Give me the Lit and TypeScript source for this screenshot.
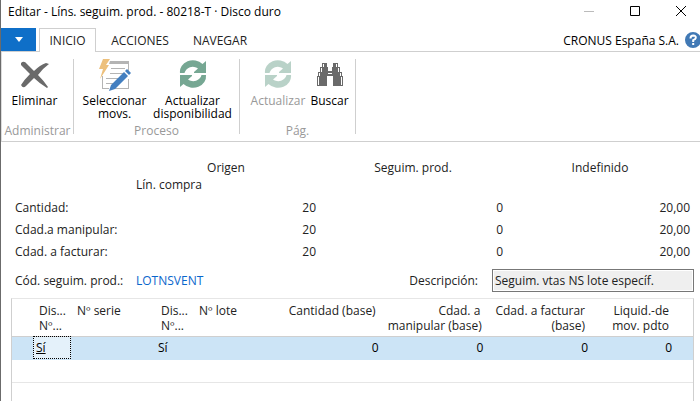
import { LitElement, html, css, svg, nothing } from "lit";
import { customElement } from "lit/decorators.js";
import { classMap } from "lit/directives/class-map.js";

const refreshIcon = svg`
  <path fill="currentColor" d="M0 12 A13 11.500 0 0 1 22.500 3 L26 0 V12 H14 V11 L18 7.500 A8.500 8 0 0 0 4.500 12 Z"/>
  <path fill="currentColor" d="M26 14 A13 11.500 0 0 1 3.500 23 L0 26 V14 H12 V15 L8 18.500 A8.500 8 0 0 0 21.500 14 Z"/>`;

const icons = {
  remove: html`<svg class="icon" viewBox="0 0 32 32" aria-hidden="true">
    <path fill="#6a6a6a" d="M2 4 Q5 1 8 5 L15 12 Q21 6 27 4 L30 5 Q23 10 19 16 Q25 22 29 28 L28 29 Q20 24 15 19 L7 27 Q4 30 2 26 Q5 21 11 15 Q5 9 2 6 Z"/>
  </svg>`,
  select: html`<svg class="icon" viewBox="0 0 32 32" aria-hidden="true">
    <path fill="#b4b4b4" d="M11 2 H30 V13 H29 V5 H10 Z M3 17 H4 V29 H10 V30 H3 Z M29 20 H30 V30 H16 V29 H29 Z"/>
    <path stroke="#b4b4b4" fill="none" d="M12 9.500H26 M11 14.500H24 M7 19.500H20 M7 24.500H14"/>
    <path fill="#edc07c" d="M4 0 H11 L7 6 H10 L1 20 L4 10 H0 Z"/>
    <path fill="#437fc0" d="M12 26 L25 13 L29 17 L16 30 L10 32 Z M26 12 L28 10 L32 14 L30 16 Z"/>
  </svg>`,
  refresh: html`<svg class="icon" viewBox="-3 -2 32 32" aria-hidden="true">${refreshIcon}</svg>`,
  find: html`<svg class="icon" viewBox="0 0 32 32" aria-hidden="true">
    <path fill="#6a6a6a" d="M8 4 H13 V8 H14 V12 H18 V8 H19 V4 H24 V8 H26 V13 H28 V17 H29 V27 H19 V17 H13 V27 H3 V17 H4 V13 H6 V8 H8 Z"/>
    <path stroke="#fff" fill="none" d="M9.500 5V8 M22.500 5V8 M7.500 9V13 M24.500 9V13 M5.500 14V17 M26.500 14V17 M4.500 18V26 M27.500 18V26 M14 14.500H18"/>
  </svg>`,
};

interface Action {
  icon: unknown;
  lines: string[];
  disabled?: boolean;
  green?: boolean;
}

const groups: { name: string; cls: string; actions: Action[] }[] = [
  { name: "Administrar", cls: "admin", actions: [{ icon: icons.remove, lines: ["Eliminar"] }] },
  {
    name: "Proceso",
    cls: "process",
    actions: [
      { icon: icons.select, lines: ["Seleccionar", "movs."] },
      { icon: icons.refresh, lines: ["Actualizar", "disponibilidad"], green: true },
    ],
  },
  {
    name: "Pág.",
    cls: "page",
    actions: [
      { icon: icons.refresh, lines: ["Actualizar"], disabled: true, green: true },
      { icon: icons.find, lines: ["Buscar"] },
    ],
  },
];

const totals = [
  ["Cantidad:", "20", "0", "20,00"],
  ["Cdad.a manipular:", "20", "0", "20,00"],
  ["Cdad. a facturar:", "20", "0", "20,00"],
];

const columns = [
  { lines: ["Dis...", "Nº..."], cls: "flag" },
  { lines: ["Nº serie"], cls: "code" },
  { lines: ["Dis...", "Nº..."], cls: "flag" },
  { lines: ["Nº lote"], cls: "code" },
  { lines: ["Cantidad (base)"], cls: "num" },
  { lines: ["Cdad. a", "manipular (base)"], cls: "num" },
  { lines: ["Cdad. a facturar", "(base)"], cls: "num" },
  { lines: ["Liquid.-de", "mov. pdto"], cls: "num" },
];

const stack = (lines: string[]) => lines.map((l, i) => (i ? html`<br />${l}` : l));

@customElement("app-root")
export class AppRoot extends LitElement {
  static styles = css`
    :host {
      display: flex;
      flex-direction: column;
      box-sizing: border-box;
      min-height: 100vh;
      overflow: hidden;
      border-left: 1px solid #6b6b6b;
      background: #fff;
      color: #222;
      font: 12px/16px "Open Sans", "Noto Sans", sans-serif;
    }
    button, input { font: inherit; color: inherit; margin: 0; }
    button { padding: 0; border: 0; background: none; }
    table { border-collapse: collapse; table-layout: fixed; width: 100%; }
    th { font-weight: normal; }
    th, td { padding: 0; }
    .titlebar { display: flex; height: 28px; margin-right: -4px; color: #000; }
    h1 { flex: 1; margin: 0; padding: 4px 0 0 7px; font: inherit; white-space: nowrap; }
    .win { width: 46px; height: 22px; display: grid; place-items: center; }
    .tabs { display: flex; height: 24px; box-sizing: border-box; border-bottom: 1px solid #cfcfcf; }
    .menu { width: 35px; background: #0f6fc8; display: grid; place-items: center; }
    .tab { padding: 0 8px; height: 24px; line-height: 24px; border: 1px solid transparent; border-bottom: 0; box-sizing: border-box; }
    .tab.active { width: 57px; margin: 0 4px 0 3px; background: #fff; border-color: #cfcfcf; }
    .tab + .tab { min-width: 80px; }
    .menu + .tab { min-width: 0; }
    .company { margin-left: auto; padding-right: 6px; line-height: 26px; color: #000; }
    .help { width: 15px; height: 24px; overflow: hidden; }
    .ribbon { display: flex; height: 90px; box-sizing: border-box; padding-top: 7px; border-left: 1px solid #dcdcdc; border-bottom: 1px solid #cfcfcf; }
    .group { display: flex; flex-direction: column; justify-content: space-between; height: 75px; box-sizing: border-box; border-right: 1px solid #cfcfcf; }
    .admin { width: 72px; }
    .process { width: 166px; }
    .page { width: 116px; }
    .actions { display: flex; justify-content: center; align-items: flex-start; }
    .action { display: flex; flex-direction: column; align-items: center; line-height: 13px; color: #000; white-space: nowrap; }
    .admin .actions, .process .actions { padding-right: 6px; }
    .page .actions { padding-left: 12px; }
    .admin .action { width: 64px; }
    .process .action { width: 78px; }
    .page .action { width: 52px; }
    .action.green .icon { color: #76a793; }
    .action:disabled { color: #999; }
    .action:disabled .icon { opacity: 0.5; }
    .icon { width: 32px; height: 32px; margin-bottom: 3px; }
    .caption { margin-bottom: -4px; text-align: center; line-height: 14px; color: #999; }
    .card { padding: 17px 10px 0 14px; }
    .totals .lead { width: 121px; }
    .totals th { text-align: left; height: 22px; }
    .totals thead th { text-align: center; height: 17px; padding-right: 7px; }
    .totals thead .source { text-align: left; padding: 0; }
    .totals thead .lead { padding: 0; }
    .totals td { text-align: right; padding: 0 7px 0 0; }
    .totals td:last-child, .totals thead th:last-child { padding-right: 0; }
    .totals .last { width: 180px; }
    .totals tbody::before { content: ""; display: block; height: 4px; }
    .fields { display: flex; align-items: center; padding: 6px 6px 0 14px; }
    .fields .code-label { width: 121px; }
    .fields a { color: #0a66cc; text-decoration: none; }
    .desc { margin-left: auto; padding-right: 14px; }
    .fields input { width: 202px; height: 23px; box-sizing: border-box; padding: 0 2px; border: 1px solid #777; outline: 1px solid #fff; outline-offset: -2px; background: #efefef; }
    .lines { flex: 1; margin: 6px 6px 0 10px; border: 1px solid #cfcfcf; border-top-color: #e6e6e6; border-bottom: 0; }
    .lines col.edge { width: 21px; }
    .lines col.flag { width: 38px; }
    .lines col.code { width: 84px; }
    .lines col.applied { width: 84px; }
    .lines col.tail { width: 18px; }
    .lines th { height: 37px; box-sizing: border-box; padding: 4px 6px 0; text-align: left; vertical-align: top; line-height: 15px; white-space: nowrap; border-bottom: 1px solid #cfcfcf; }
    .lines td { height: 22px; padding: 0 3px; border-bottom: 1px solid #e6e6e6; }
    .lines .num { text-align: right; }
    .selected td { background: #cce4f6; color: #000; border-color: #cce4f6; }
    .selected .focus { background: #e4f1fa; outline: 1px dotted #000; outline-offset: -1px; }
  `;

  render() {
    return html`
      <header class="titlebar">
        <h1>Editar - Líns. seguim. prod. - 80218-T · Disco duro</h1>
        <button class="win" aria-label="Minimizar" disabled>
          <svg width="10" height="10"><path d="M0 5.500H10" stroke="#bbb" /></svg>
        </button>
        <button class="win" aria-label="Maximizar">
          <svg width="10" height="10"><path d="M.5 .5H9.500V9.500H.5Z" stroke="#000" fill="none" /></svg>
        </button>
        <button class="win" aria-label="Cerrar">
          <svg width="10" height="10"><path d="M0 0L10 10M10 0L0 10" stroke="#000" /></svg>
        </button>
      </header>
      <nav class="tabs">
        <button class="menu" aria-label="Menú">
          <svg width="8" height="5"><path d="M0 0H8L4 5Z" fill="#fff" /></svg>
        </button>
        <button class="tab active">INICIO</button>
        <button class="tab">ACCIONES</button>
        <button class="tab">NAVEGAR</button>
        <span class="company">CRONUS España S.A.</span>
        <button class="help" aria-label="Ayuda">
          <svg width="16" height="24" viewBox="0 0 16 24">
            <circle cx="8" cy="12" r="8" fill="#4179b5" />
            <path d="M5.500 10.500Q5.500 7.500 8.200 7.500Q11 7.600 10.800 9.800Q10.600 11.200 8.200 12.200V14M8.200 15V17" stroke="#fff" stroke-width="2" fill="none" />
          </svg>
        </button>
      </nav>
      <section class="ribbon">
        ${groups.map(
          (g) => html`<div class="group ${g.cls}">
            <div class="actions">
              ${g.actions.map(
                (a) => html`<button class=${classMap({ action: true, green: !!a.green })} ?disabled=${a.disabled}>
                  ${a.icon}<span>${stack(a.lines)}</span>
                </button>`
              )}
            </div>
            <div class="caption">${g.name}</div>
          </div>`
        )}
      </section>
      <section class="card">
        <table class="totals">
          <thead>
            <tr>
              <th class="lead"></th>
              <th scope="col">Origen</th>
              <th scope="col">Seguim. prod.</th>
              <th scope="col" class="last">Indefinido</th>
            </tr>
            <tr>
              <th class="lead"></th>
              <th class="source">Lín. compra</th>
              <th></th>
              <th></th>
            </tr>
          </thead>
          <tbody>
            ${totals.map(
              ([label, ...values]) => html`<tr>
                <th scope="row">${label}</th>
                ${values.map((v) => html`<td>${v}</td>`)}
              </tr>`
            )}
          </tbody>
        </table>
      </section>
      <section class="fields">
        <span class="code-label">Cód. seguim. prod.:</span>
        <a href="#LOTNSVENT">LOTNSVENT</a>
        <label class="desc" for="desc">Descripción:</label>
        <input id="desc" readonly .value=${"Seguim. vtas NS lote específ."} />
      </section>
      <section class="lines">
        <table>
          <colgroup>
            <col class="edge" /><col class="flag" /><col class="code" /><col class="flag" /><col class="code" />
            <col /><col /><col /><col class="applied" /><col class="tail" />
          </colgroup>
          <thead>
            <tr>
              <th></th>
              ${columns.map((c) => html`<th scope="col" class=${c.cls}>${stack(c.lines)}</th>`)}
              <th></th>
            </tr>
          </thead>
          <tbody>
            <tr class="selected">
              <td></td>
              <td class="focus"><u>Sí</u></td>
              <td></td>
              <td>Sí</td>
              <td></td>
              <td class="num">0</td>
              <td class="num">0</td>
              <td class="num">0</td>
              <td class="num">0</td>
              <td></td>
            </tr>
            <tr>${Array.from({ length: 10 }, () => html`<td>${nothing}</td>`)}</tr>
          </tbody>
        </table>
      </section>
    `;
  }
}
